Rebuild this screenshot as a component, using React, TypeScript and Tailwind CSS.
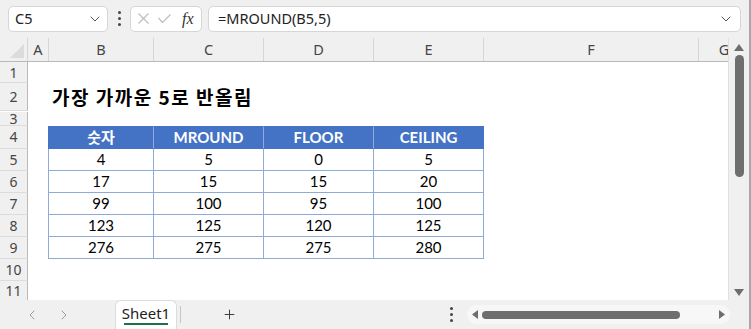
import { ChevronDown, ChevronLeft, ChevronRight, Plus } from 'lucide-react'

const cols = [
  { key: 'A', w: 'w-[21px]' },
  { key: 'B', w: 'w-[105px]' },
  { key: 'C', w: 'w-[110px]' },
  { key: 'D', w: 'w-[110px]' },
  { key: 'E', w: 'w-[110px]' },
  { key: 'F', w: 'w-[215px]' },
]

const data = [
  ['4', '5', '0', '5'],
  ['17', '15', '15', '20'],
  ['99', '100', '95', '100'],
  ['123', '125', '120', '125'],
  ['276', '275', '275', '280'],
]

const cellW = ['w-[106px]', 'w-[110px]', 'w-[110px]', 'w-[110px]']
const heads = ['숫자', 'MROUND', 'FLOOR', 'CEILING']

function RowHead({ n, h }: { n?: number; h: string }) {
  return (
    <div className={`${h} w-[28px] shrink-0 bg-[#f0f0f0] border-r border-r-[#b9b9b9] border-b border-b-[#dcdcdc] flex items-center justify-center text-[14px] text-[#454545]`}>
      {n}
    </div>
  )
}

function Dots() {
  return (
    <div className="flex flex-col gap-[3px]">
      <span className="w-[3px] h-[3px] rounded-full bg-[#444]" />
      <span className="w-[3px] h-[3px] rounded-full bg-[#444]" />
      <span className="w-[3px] h-[3px] rounded-full bg-[#444]" />
    </div>
  )
}

export default function App() {
  return (
    <div
      className="w-[751px] h-[329px] overflow-hidden bg-[#f0f0f0] flex flex-col border-r-2 border-r-[#a8a8a8]"
      style={{ fontFamily: '"Noto Sans", "Noto Sans CJK KR", sans-serif' }}
    >
      {/* formula bar */}
      <div className="h-[38px] shrink-0 flex items-center pl-[8px] pr-[8px] pb-[1px]">
        <div className="w-[100px] h-[26px] bg-white border border-[#d6d6d6] rounded-[5px] flex items-center justify-between pl-[6px] pr-[4px]">
          <span className="text-[14.5px] text-[#222]">C5</span>
          <ChevronDown className="w-4 h-4 text-[#555]" strokeWidth={1.5} />
        </div>
        <div className="w-[22px] flex justify-center">
          <Dots />
        </div>
        <div className="w-[72px] h-[26px] bg-white border border-[#d6d6d6] rounded-[5px] flex items-center pl-[7px] gap-[9px]">
          <svg width="11" height="11" viewBox="0 0 11 11" stroke="#bdbdbd" strokeWidth="1.2" fill="none">
            <path d="M0.5 0.5 L10.5 10.5 M10.5 0.5 L0.5 10.5" />
          </svg>
          <svg width="13" height="9" viewBox="0 0 13 9" stroke="#bdbdbd" strokeWidth="1.2" fill="none">
            <path d="M0.5 4 L4.5 8.5 L12.5 0.5" />
          </svg>
          <span className="text-[16px] italic text-[#333] ml-[2px]" style={{ fontFamily: '"Liberation Serif", serif' }}>
            fx
          </span>
        </div>
        <div className="flex-1 ml-[6px] h-[26px] bg-white border border-[#d6d6d6] rounded-[5px] flex items-center justify-between pl-[9px] pr-[6px]">
          <span className="text-[14.5px] text-[#222]">=MROUND(B5,5)</span>
          <ChevronDown className="w-4 h-4 text-[#555]" strokeWidth={1.5} />
        </div>
      </div>

      {/* grid + vertical scrollbar */}
      <div className="flex h-[262px] shrink-0">
        <div className="w-[728px] shrink-0 flex flex-col bg-white overflow-hidden">
          {/* column headers */}
          <div className="h-[24px] shrink-0 flex bg-[#f0f0f0] border-b border-b-[#b9b9b9] text-[14.5px] text-[#454545]">
            <div className="w-[28px] shrink-0 border-r border-r-[#d6d6d6] relative">
              <svg className="absolute right-[3px] bottom-[3px]" width="14" height="14" viewBox="0 0 14 14">
                <path d="M14 0 L14 14 L0 14 Z" fill="#dcdcdc" />
              </svg>
            </div>
            {cols.map((c) => (
              <div key={c.key} className={`${c.w} shrink-0 border-r border-r-[#d6d6d6] flex items-center justify-center`}>
                {c.key}
              </div>
            ))}
            <div className="w-[50px] shrink-0 flex items-center justify-center">G</div>
          </div>

          <div className="flex"><RowHead n={1} h="h-[21px]" /></div>
          <div className="flex items-center">
            <RowHead n={2} h="h-[28px]" />
            <span
              className="ml-[24px] text-[19px] tracking-[1.5px] font-bold text-black"
              style={{ fontFamily: '"Noto Sans CJK KR", sans-serif' }}
            >
              가장 가까운 5로 반올림
            </span>
          </div>
          <div className="flex"><RowHead n={3} h="h-[14px]" /></div>

          {/* table header row */}
          <div className="flex">
            <RowHead n={4} h="h-[23px]" />
            <div className="w-[20px] shrink-0" />
            {heads.map((t, i) => (
              <div
                key={t}
                className={`${cellW[i]} h-[23px] shrink-0 bg-[#4472c4] border-y border-y-[#4472c4] border-r border-r-[#8eaadb] ${i === 0 ? 'border-l border-l-[#4472c4]' : ''} ${i === 3 ? 'border-r-[#4472c4]' : ''} flex items-center justify-center text-white font-bold text-[15px]`}
                style={{ fontFamily: 'Lato, "Noto Sans CJK KR", sans-serif' }}
              >
                {t}
              </div>
            ))}
          </div>

          {data.map((r, ri) => (
            <div key={ri} className="flex">
              <RowHead n={5 + ri} h="h-[22px]" />
              <div className="w-[20px] shrink-0" />
              {r.map((v, i) => (
                <div
                  key={i}
                  className={`${cellW[i]} h-[22px] shrink-0 border-b border-r border-[#8eaadb] ${i === 0 ? 'border-l' : ''} flex items-center justify-center text-[15px] text-black`}
                  style={{ fontFamily: 'Lato, sans-serif' }}
                >
                  {v}
                </div>
              ))}
            </div>
          ))}

          <div className="flex"><RowHead n={10} h="h-[22px]" /></div>
          <div className="flex"><RowHead n={11} h="h-[20px]" /></div>
        </div>

        {/* vertical scrollbar */}
        <div className="flex-1 flex flex-col items-center pt-[6px] pb-[4px] bg-[#f0f0f0] border-l border-l-[#e0e0e0]">
          <svg width="10" height="7" viewBox="0 0 10 7">
            <path d="M5 0 L10 7 L0 7 Z" fill="#6e6e6e" />
          </svg>
          <div className="mt-[4px] w-[9px] h-[122px] rounded-[5px] bg-[#6e6e6e]" />
          <div className="flex-1" />
          <svg width="10" height="7" viewBox="0 0 10 7">
            <path d="M0 0 L10 0 L5 7 Z" fill="#6e6e6e" />
          </svg>
        </div>
      </div>

      {/* sheet tabs */}
      <div className="flex-1 flex items-stretch">
        <div className="w-[115px] shrink-0 flex items-center pl-[24px] gap-[16px] text-[#9a9a9a]">
          <ChevronLeft className="w-4 h-4" strokeWidth={1.5} />
          <ChevronRight className="w-4 h-4" strokeWidth={1.5} />
        </div>
        <div className="w-[62px] shrink-0 bg-white border-x border-t border-[#dcdcdc] rounded-t-[6px] flex flex-col items-center pt-[2px]">
          <span className="text-[15px] text-[#222] leading-[20px]">Sheet1</span>
          <span className="w-[44px] h-[2px] bg-[#1e7145]" />
        </div>
        <div className="w-[1px] my-[6px] ml-[3px] bg-[#c6c6c6]" />
        <div className="w-[96px] flex items-center justify-center text-[#333]">
          <Plus className="w-[15px] h-[15px]" strokeWidth={1.5} />
        </div>
        <div className="flex-1" />
        <div className="w-[20px] mr-[6px] flex items-center justify-center">
          <Dots />
        </div>
        <div className="w-[263px] my-[5px] mr-[19px] rounded-[9px] bg-[#f7f7f7] flex items-center px-[5px]">
          <svg width="6" height="9" viewBox="0 0 6 9">
            <path d="M6 0 L6 9 L0 4.5 Z" fill="#6e6e6e" />
          </svg>
          <div className="ml-[4px] w-[198px] h-[8px] rounded-[4px] bg-[#6e6e6e]" />
          <div className="flex-1" />
          <svg width="6" height="9" viewBox="0 0 6 9">
            <path d="M0 0 L6 4.5 L0 9 Z" fill="#6e6e6e" />
          </svg>
        </div>
      </div>
    </div>
  )
}
